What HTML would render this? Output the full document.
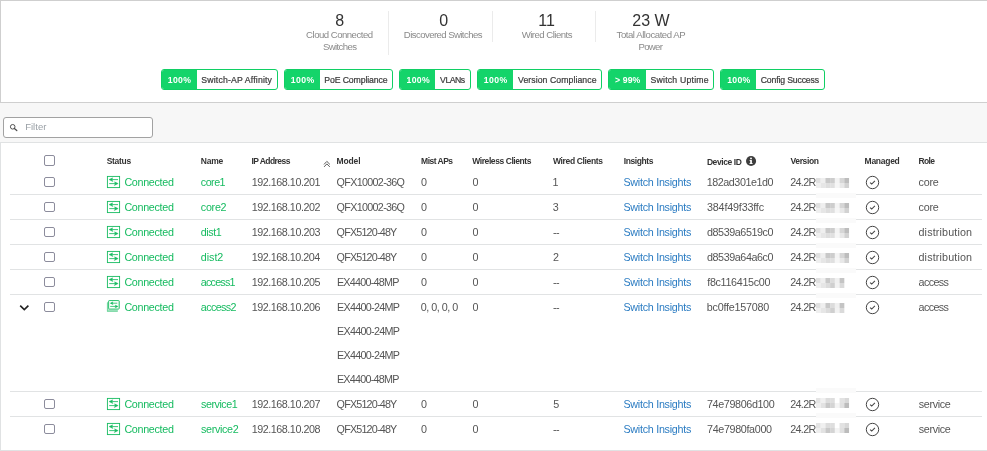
<!DOCTYPE html>
<html><head><meta charset="utf-8"><title>Switches</title><style>
html,body{margin:0;padding:0}
body{will-change:transform;width:987px;height:451px;background:#f7f7f7;position:relative;overflow:hidden;font-family:"Liberation Sans",sans-serif}
.abs{position:absolute}
.t{position:absolute;white-space:pre;line-height:20px;height:20px}
.panel{position:absolute;background:#fff;border:1px solid #e0e2e3;box-sizing:content-box;margin:0 0 0 0}
.vsep{position:absolute;width:1px;background:#ebebeb}
.pill{position:absolute;top:69px;height:19px;border:1px solid #10cf64;border-radius:3px;background:#fff;overflow:hidden}
.pill i{position:absolute;left:0;top:0;bottom:0;background:#14d46a}
.filter{position:absolute;left:3px;top:117px;width:148px;height:19px;border:1px solid #a2a2a2;border-radius:3px;background:#fff}
.hl{position:absolute;left:10px;width:972px;height:1px;background:#e1e3e4}
.cb{position:absolute;width:8.4px;height:8px;border:1px solid #8c8c9c;border-radius:2px;background:#fff}
</style></head><body>
<div class="panel" style="left:0;top:0;width:1000px;height:101px;border-color:#cfcfcf"></div>
<div class="panel" style="left:0;top:142px;width:1000px;height:307px"></div>
<div class="vsep" style="left:388px;top:11px;height:44px"></div>
<div class="vsep" style="left:492px;top:11px;height:31px"></div>
<div class="vsep" style="left:595px;top:11px;height:31px"></div>
<div class="pill" style="left:161px;width:115.0px"><i style="width:35.0px"></i></div>
<div class="pill" style="left:284px;width:107.0px"><i style="width:35.0px"></i></div>
<div class="pill" style="left:399px;width:69.5px"><i style="width:34.6px"></i></div>
<div class="pill" style="left:477px;width:123.0px"><i style="width:35.0px"></i></div>
<div class="pill" style="left:608px;width:103.5px"><i style="width:36.8px"></i></div>
<div class="pill" style="left:720px;width:103.0px"><i style="width:35.0px"></i></div>
<div class="filter"></div>
<svg class="abs" style="left:8px;top:122px" width="12" height="12" viewBox="0 0 12 12"><circle cx="4.7" cy="4.8" r="2.3" fill="none" stroke="#4a4a4a" stroke-width="0.95"/><path d="M6.4 6.5 L8.8 8.5" stroke="#4a4a4a" stroke-width="1.25" stroke-linecap="round"/></svg>
<div class="hl" style="top:194px"></div>
<div class="hl" style="top:219px"></div>
<div class="hl" style="top:244px"></div>
<div class="hl" style="top:269px"></div>
<div class="hl" style="top:294px"></div>
<div class="hl" style="top:391px"></div>
<div class="hl" style="top:416px"></div>
<div class="cb" style="left:44px;top:155px;width:9px;height:9px"></div>
<div class="cb" style="left:44.3px;top:177px"></div>
<div class="cb" style="left:44.3px;top:202px"></div>
<div class="cb" style="left:44.3px;top:227px"></div>
<div class="cb" style="left:44.3px;top:252px"></div>
<div class="cb" style="left:44.3px;top:277px"></div>
<div class="cb" style="left:44.3px;top:302px"></div>
<div class="cb" style="left:44.3px;top:399px"></div>
<div class="cb" style="left:44.3px;top:424px"></div>
<svg class="abs" style="left:106px;top:175px" width="15" height="14" viewBox="0 0 15 14"><rect x="1.4" y="1.4" width="12.2" height="11.2" fill="none" stroke="#16bb60" stroke-width="0.9"/><path d="M4 4.6H12M3.2 8.6H11" stroke="#16bb60" stroke-width="0.85" fill="none"/><path d="M3 4.6L6.7 2.8L5.9 4.6L6.9 6.6Z" fill="#16bb60" stroke="#16bb60" stroke-width="0.4" stroke-linejoin="round"/><path d="M12.2 8.6L8.5 6.8L9.3 8.6L8.3 10.6Z" fill="#16bb60" stroke="#16bb60" stroke-width="0.4" stroke-linejoin="round"/></svg>
<svg class="abs" style="left:106px;top:200px" width="15" height="14" viewBox="0 0 15 14"><rect x="1.4" y="1.4" width="12.2" height="11.2" fill="none" stroke="#16bb60" stroke-width="0.9"/><path d="M4 4.6H12M3.2 8.6H11" stroke="#16bb60" stroke-width="0.85" fill="none"/><path d="M3 4.6L6.7 2.8L5.9 4.6L6.9 6.6Z" fill="#16bb60" stroke="#16bb60" stroke-width="0.4" stroke-linejoin="round"/><path d="M12.2 8.6L8.5 6.8L9.3 8.6L8.3 10.6Z" fill="#16bb60" stroke="#16bb60" stroke-width="0.4" stroke-linejoin="round"/></svg>
<svg class="abs" style="left:106px;top:225px" width="15" height="14" viewBox="0 0 15 14"><rect x="1.4" y="1.4" width="12.2" height="11.2" fill="none" stroke="#16bb60" stroke-width="0.9"/><path d="M4 4.6H12M3.2 8.6H11" stroke="#16bb60" stroke-width="0.85" fill="none"/><path d="M3 4.6L6.7 2.8L5.9 4.6L6.9 6.6Z" fill="#16bb60" stroke="#16bb60" stroke-width="0.4" stroke-linejoin="round"/><path d="M12.2 8.6L8.5 6.8L9.3 8.6L8.3 10.6Z" fill="#16bb60" stroke="#16bb60" stroke-width="0.4" stroke-linejoin="round"/></svg>
<svg class="abs" style="left:106px;top:250px" width="15" height="14" viewBox="0 0 15 14"><rect x="1.4" y="1.4" width="12.2" height="11.2" fill="none" stroke="#16bb60" stroke-width="0.9"/><path d="M4 4.6H12M3.2 8.6H11" stroke="#16bb60" stroke-width="0.85" fill="none"/><path d="M3 4.6L6.7 2.8L5.9 4.6L6.9 6.6Z" fill="#16bb60" stroke="#16bb60" stroke-width="0.4" stroke-linejoin="round"/><path d="M12.2 8.6L8.5 6.8L9.3 8.6L8.3 10.6Z" fill="#16bb60" stroke="#16bb60" stroke-width="0.4" stroke-linejoin="round"/></svg>
<svg class="abs" style="left:106px;top:275px" width="15" height="14" viewBox="0 0 15 14"><rect x="1.4" y="1.4" width="12.2" height="11.2" fill="none" stroke="#16bb60" stroke-width="0.9"/><path d="M4 4.6H12M3.2 8.6H11" stroke="#16bb60" stroke-width="0.85" fill="none"/><path d="M3 4.6L6.7 2.8L5.9 4.6L6.9 6.6Z" fill="#16bb60" stroke="#16bb60" stroke-width="0.4" stroke-linejoin="round"/><path d="M12.2 8.6L8.5 6.8L9.3 8.6L8.3 10.6Z" fill="#16bb60" stroke="#16bb60" stroke-width="0.4" stroke-linejoin="round"/></svg>
<svg class="abs" style="left:106px;top:300px" width="15" height="14" viewBox="0 0 15 14"><path d="M1 2.4L2.6 1V9.4H11.9L11.9 11.8H1Z" fill="#16bb60" opacity="0.42"/><path d="M13.3 0.6L14 0.9V8L13.3 9Z" fill="#16bb60" opacity="0.4"/><path d="M1.3 2.6V11.4H11.6" fill="none" stroke="#16bb60" stroke-width="0.6" opacity="0.55"/><rect x="2.65" y="0.55" width="10.5" height="8.5" rx="0.6" fill="#fff" stroke="#16bb60" stroke-width="0.9"/><path d="M5 3.2H11.3M4.2 6.4H11" stroke="#16bb60" stroke-width="0.8" fill="none"/><path d="M4.1 3.2L7 1.8L6.4 3.2L7.1 4.7Z" fill="#16bb60" stroke="#16bb60" stroke-width="0.3" stroke-linejoin="round"/><path d="M12.1 6.4L9.2 5L9.8 6.4L9.1 7.9Z" fill="#16bb60" stroke="#16bb60" stroke-width="0.3" stroke-linejoin="round"/></svg>
<svg class="abs" style="left:106px;top:397px" width="15" height="14" viewBox="0 0 15 14"><rect x="1.4" y="1.4" width="12.2" height="11.2" fill="none" stroke="#16bb60" stroke-width="0.9"/><path d="M4 4.6H12M3.2 8.6H11" stroke="#16bb60" stroke-width="0.85" fill="none"/><path d="M3 4.6L6.7 2.8L5.9 4.6L6.9 6.6Z" fill="#16bb60" stroke="#16bb60" stroke-width="0.4" stroke-linejoin="round"/><path d="M12.2 8.6L8.5 6.8L9.3 8.6L8.3 10.6Z" fill="#16bb60" stroke="#16bb60" stroke-width="0.4" stroke-linejoin="round"/></svg>
<svg class="abs" style="left:106px;top:422px" width="15" height="14" viewBox="0 0 15 14"><rect x="1.4" y="1.4" width="12.2" height="11.2" fill="none" stroke="#16bb60" stroke-width="0.9"/><path d="M4 4.6H12M3.2 8.6H11" stroke="#16bb60" stroke-width="0.85" fill="none"/><path d="M3 4.6L6.7 2.8L5.9 4.6L6.9 6.6Z" fill="#16bb60" stroke="#16bb60" stroke-width="0.4" stroke-linejoin="round"/><path d="M12.2 8.6L8.5 6.8L9.3 8.6L8.3 10.6Z" fill="#16bb60" stroke="#16bb60" stroke-width="0.4" stroke-linejoin="round"/></svg>
<svg class="abs" style="left:864px;top:174px" width="17" height="17" viewBox="0 0 17 17"><circle cx="8.5" cy="8.5" r="6.2" fill="none" stroke="#444" stroke-width="1"/><path d="M6.1 8.6L7.7 10.0L10.9 6.8" fill="none" stroke="#444" stroke-width="1.05"/></svg>
<svg class="abs" style="left:864px;top:199px" width="17" height="17" viewBox="0 0 17 17"><circle cx="8.5" cy="8.5" r="6.2" fill="none" stroke="#444" stroke-width="1"/><path d="M6.1 8.6L7.7 10.0L10.9 6.8" fill="none" stroke="#444" stroke-width="1.05"/></svg>
<svg class="abs" style="left:864px;top:224px" width="17" height="17" viewBox="0 0 17 17"><circle cx="8.5" cy="8.5" r="6.2" fill="none" stroke="#444" stroke-width="1"/><path d="M6.1 8.6L7.7 10.0L10.9 6.8" fill="none" stroke="#444" stroke-width="1.05"/></svg>
<svg class="abs" style="left:864px;top:249px" width="17" height="17" viewBox="0 0 17 17"><circle cx="8.5" cy="8.5" r="6.2" fill="none" stroke="#444" stroke-width="1"/><path d="M6.1 8.6L7.7 10.0L10.9 6.8" fill="none" stroke="#444" stroke-width="1.05"/></svg>
<svg class="abs" style="left:864px;top:274px" width="17" height="17" viewBox="0 0 17 17"><circle cx="8.5" cy="8.5" r="6.2" fill="none" stroke="#444" stroke-width="1"/><path d="M6.1 8.6L7.7 10.0L10.9 6.8" fill="none" stroke="#444" stroke-width="1.05"/></svg>
<svg class="abs" style="left:864px;top:299px" width="17" height="17" viewBox="0 0 17 17"><circle cx="8.5" cy="8.5" r="6.2" fill="none" stroke="#444" stroke-width="1"/><path d="M6.1 8.6L7.7 10.0L10.9 6.8" fill="none" stroke="#444" stroke-width="1.05"/></svg>
<svg class="abs" style="left:864px;top:396px" width="17" height="17" viewBox="0 0 17 17"><circle cx="8.5" cy="8.5" r="6.2" fill="none" stroke="#444" stroke-width="1"/><path d="M6.1 8.6L7.7 10.0L10.9 6.8" fill="none" stroke="#444" stroke-width="1.05"/></svg>
<svg class="abs" style="left:864px;top:421px" width="17" height="17" viewBox="0 0 17 17"><circle cx="8.5" cy="8.5" r="6.2" fill="none" stroke="#444" stroke-width="1"/><path d="M6.1 8.6L7.7 10.0L10.9 6.8" fill="none" stroke="#444" stroke-width="1.05"/></svg>
<svg class="abs" style="left:18px;top:302px" width="13" height="11" viewBox="0 0 13 11"><path d="M2.2 3.6L6.3 7.6L10.4 3.6" fill="none" stroke="#222" stroke-width="1.6"/></svg>
<svg class="abs" style="left:322px;top:159px" width="10" height="10" viewBox="0 0 10 10"><path d="M2 5.4L4.85 2.4L7.9 5.4M2.1 7.9L4.85 4.9L7.8 7.9" fill="none" stroke="#333" stroke-width="0.8"/></svg>
<svg class="abs" style="left:745px;top:155px" width="12" height="12" viewBox="0 0 12 12"><circle cx="6.05" cy="5.95" r="5.05" fill="#3e3e3e"/><rect x="5.2" y="5.1" width="1.7" height="3.6" fill="#fff"/><rect x="4.6" y="5.1" width="1.6" height="0.9" fill="#fff"/><rect x="4.5" y="8.1" width="3.1" height="0.9" fill="#fff"/><circle cx="6" cy="3.4" r="0.95" fill="#fff"/></svg>
<svg class="abs" style="left:816px;top:178px" width="40" height="10" viewBox="0 0 40 10"><rect x="0.00" y="0" width="4.76" height="5" fill="#e0e0e0"/><rect x="4.71" y="0" width="4.76" height="5" fill="#efefef"/><rect x="9.43" y="0" width="4.76" height="5" fill="#c8c8c8"/><rect x="14.14" y="0" width="4.76" height="5" fill="#cdcdcd"/><rect x="18.86" y="0" width="4.76" height="5" fill="#f4f4f4"/><rect x="23.57" y="0" width="4.76" height="5" fill="#d6d6d6"/><rect x="28.29" y="0" width="4.76" height="5" fill="#bdbdbd"/><rect x="0.00" y="5" width="4.76" height="5" fill="#efefef"/><rect x="4.71" y="5" width="4.76" height="5" fill="#e6e6e6"/><rect x="9.43" y="5" width="4.76" height="5" fill="#dedede"/><rect x="14.14" y="5" width="4.76" height="5" fill="#e0e0e0"/><rect x="18.86" y="5" width="4.76" height="5" fill="#f6f6f6"/><rect x="23.57" y="5" width="4.76" height="5" fill="#e8e8e8"/><rect x="28.29" y="5" width="4.76" height="5" fill="#d2d2d2"/></svg>
<svg class="abs" style="left:816px;top:203px" width="40" height="10" viewBox="0 0 40 10"><rect x="0.00" y="0" width="4.76" height="5" fill="#e0e0e0"/><rect x="4.71" y="0" width="4.76" height="5" fill="#efefef"/><rect x="9.43" y="0" width="4.76" height="5" fill="#c8c8c8"/><rect x="14.14" y="0" width="4.76" height="5" fill="#cdcdcd"/><rect x="18.86" y="0" width="4.76" height="5" fill="#f4f4f4"/><rect x="23.57" y="0" width="4.76" height="5" fill="#d6d6d6"/><rect x="28.29" y="0" width="4.76" height="5" fill="#bdbdbd"/><rect x="0.00" y="5" width="4.76" height="5" fill="#efefef"/><rect x="4.71" y="5" width="4.76" height="5" fill="#e6e6e6"/><rect x="9.43" y="5" width="4.76" height="5" fill="#dedede"/><rect x="14.14" y="5" width="4.76" height="5" fill="#e0e0e0"/><rect x="18.86" y="5" width="4.76" height="5" fill="#f6f6f6"/><rect x="23.57" y="5" width="4.76" height="5" fill="#e8e8e8"/><rect x="28.29" y="5" width="4.76" height="5" fill="#d2d2d2"/></svg>
<svg class="abs" style="left:816px;top:228px" width="40" height="10" viewBox="0 0 40 10"><rect x="0.00" y="0" width="4.76" height="5" fill="#e0e0e0"/><rect x="4.71" y="0" width="4.76" height="5" fill="#efefef"/><rect x="9.43" y="0" width="4.76" height="5" fill="#c8c8c8"/><rect x="14.14" y="0" width="4.76" height="5" fill="#cdcdcd"/><rect x="18.86" y="0" width="4.76" height="5" fill="#f4f4f4"/><rect x="23.57" y="0" width="4.76" height="5" fill="#d6d6d6"/><rect x="28.29" y="0" width="4.76" height="5" fill="#bdbdbd"/><rect x="0.00" y="5" width="4.76" height="5" fill="#efefef"/><rect x="4.71" y="5" width="4.76" height="5" fill="#e6e6e6"/><rect x="9.43" y="5" width="4.76" height="5" fill="#dedede"/><rect x="14.14" y="5" width="4.76" height="5" fill="#e0e0e0"/><rect x="18.86" y="5" width="4.76" height="5" fill="#f6f6f6"/><rect x="23.57" y="5" width="4.76" height="5" fill="#e8e8e8"/><rect x="28.29" y="5" width="4.76" height="5" fill="#d2d2d2"/></svg>
<svg class="abs" style="left:816px;top:253px" width="40" height="10" viewBox="0 0 40 10"><rect x="0.00" y="0" width="4.76" height="5" fill="#e0e0e0"/><rect x="4.71" y="0" width="4.76" height="5" fill="#efefef"/><rect x="9.43" y="0" width="4.76" height="5" fill="#c8c8c8"/><rect x="14.14" y="0" width="4.76" height="5" fill="#cdcdcd"/><rect x="18.86" y="0" width="4.76" height="5" fill="#f4f4f4"/><rect x="23.57" y="0" width="4.76" height="5" fill="#d6d6d6"/><rect x="28.29" y="0" width="4.76" height="5" fill="#bdbdbd"/><rect x="0.00" y="5" width="4.76" height="5" fill="#efefef"/><rect x="4.71" y="5" width="4.76" height="5" fill="#e6e6e6"/><rect x="9.43" y="5" width="4.76" height="5" fill="#dedede"/><rect x="14.14" y="5" width="4.76" height="5" fill="#e0e0e0"/><rect x="18.86" y="5" width="4.76" height="5" fill="#f6f6f6"/><rect x="23.57" y="5" width="4.76" height="5" fill="#e8e8e8"/><rect x="28.29" y="5" width="4.76" height="5" fill="#d2d2d2"/></svg>
<svg class="abs" style="left:816px;top:278px" width="40" height="10" viewBox="0 0 40 10"><rect x="0.00" y="0" width="4.76" height="5" fill="#e0e0e0"/><rect x="4.71" y="0" width="4.76" height="5" fill="#efefef"/><rect x="9.43" y="0" width="4.76" height="5" fill="#c8c8c8"/><rect x="14.14" y="0" width="4.76" height="5" fill="#dcdcdc"/><rect x="18.86" y="0" width="4.76" height="5" fill="#f0f0f0"/><rect x="23.57" y="0" width="4.76" height="5" fill="#c4c4c4"/><rect x="0.00" y="5" width="4.76" height="5" fill="#efefef"/><rect x="4.71" y="5" width="4.76" height="5" fill="#e6e6e6"/><rect x="9.43" y="5" width="4.76" height="5" fill="#dcdcdc"/><rect x="14.14" y="5" width="4.76" height="5" fill="#cfcfcf"/><rect x="18.86" y="5" width="4.76" height="5" fill="#f2f2f2"/><rect x="23.57" y="5" width="4.76" height="5" fill="#dadada"/></svg>
<svg class="abs" style="left:816px;top:303px" width="40" height="10" viewBox="0 0 40 10"><rect x="0.00" y="0" width="4.76" height="5" fill="#e0e0e0"/><rect x="4.71" y="0" width="4.76" height="5" fill="#efefef"/><rect x="9.43" y="0" width="4.76" height="5" fill="#c8c8c8"/><rect x="14.14" y="0" width="4.76" height="5" fill="#dcdcdc"/><rect x="18.86" y="0" width="4.76" height="5" fill="#f0f0f0"/><rect x="23.57" y="0" width="4.76" height="5" fill="#c4c4c4"/><rect x="0.00" y="5" width="4.76" height="5" fill="#efefef"/><rect x="4.71" y="5" width="4.76" height="5" fill="#e6e6e6"/><rect x="9.43" y="5" width="4.76" height="5" fill="#dcdcdc"/><rect x="14.14" y="5" width="4.76" height="5" fill="#cfcfcf"/><rect x="18.86" y="5" width="4.76" height="5" fill="#f2f2f2"/><rect x="23.57" y="5" width="4.76" height="5" fill="#dadada"/></svg>
<svg class="abs" style="left:816px;top:398px" width="40" height="10" viewBox="0 0 40 10"><rect x="0.00" y="0" width="4.76" height="5" fill="#e4e4e4"/><rect x="4.71" y="0" width="4.76" height="5" fill="#f0f0f0"/><rect x="9.43" y="0" width="4.76" height="5" fill="#dcdcdc"/><rect x="14.14" y="0" width="4.76" height="5" fill="#dedede"/><rect x="18.86" y="0" width="4.76" height="5" fill="#ffffff"/><rect x="23.57" y="0" width="4.76" height="5" fill="#e2e2e2"/><rect x="28.29" y="0" width="4.76" height="5" fill="#d8d8d8"/><rect x="0.00" y="5" width="4.76" height="5" fill="#eeeeee"/><rect x="4.71" y="5" width="4.76" height="5" fill="#e2e2e2"/><rect x="9.43" y="5" width="4.76" height="5" fill="#c8c8c8"/><rect x="14.14" y="5" width="4.76" height="5" fill="#d4d4d4"/><rect x="18.86" y="5" width="4.76" height="5" fill="#f4f4f4"/><rect x="23.57" y="5" width="4.76" height="5" fill="#e0e0e0"/><rect x="28.29" y="5" width="4.76" height="5" fill="#bcbcbc"/></svg>
<svg class="abs" style="left:816px;top:423px" width="40" height="10" viewBox="0 0 40 10"><rect x="0.00" y="0" width="4.76" height="5" fill="#e4e4e4"/><rect x="4.71" y="0" width="4.76" height="5" fill="#f0f0f0"/><rect x="9.43" y="0" width="4.76" height="5" fill="#dcdcdc"/><rect x="14.14" y="0" width="4.76" height="5" fill="#dedede"/><rect x="18.86" y="0" width="4.76" height="5" fill="#ffffff"/><rect x="23.57" y="0" width="4.76" height="5" fill="#e2e2e2"/><rect x="28.29" y="0" width="4.76" height="5" fill="#d8d8d8"/><rect x="0.00" y="5" width="4.76" height="5" fill="#eeeeee"/><rect x="4.71" y="5" width="4.76" height="5" fill="#e2e2e2"/><rect x="9.43" y="5" width="4.76" height="5" fill="#c8c8c8"/><rect x="14.14" y="5" width="4.76" height="5" fill="#d4d4d4"/><rect x="18.86" y="5" width="4.76" height="5" fill="#f4f4f4"/><rect x="23.57" y="5" width="4.76" height="5" fill="#e0e0e0"/><rect x="28.29" y="5" width="4.76" height="5" fill="#bcbcbc"/></svg>
<div class="abs" style="left:816px;top:193px;width:40px;height:5px;background:#fafafa"></div>
<div class="abs" style="left:816px;top:218px;width:40px;height:5px;background:#fafafa"></div>
<div class="abs" style="left:816px;top:243px;width:40px;height:5px;background:#fafafa"></div>
<div class="abs" style="left:816px;top:268px;width:40px;height:5px;background:#fafafa"></div>
<div class="abs" style="left:816px;top:293px;width:40px;height:5px;background:#fafafa"></div>
<div class="abs" style="left:816px;top:388px;width:40px;height:5px;background:#fafafa"></div>
<div class="abs" style="left:816px;top:413px;width:40px;height:5px;background:#fafafa"></div>
<span class="t" style="left:335.35px;top:11.06px;font-size:16.0px;color:#333">8</span>
<span class="t" style="left:439.18px;top:11.06px;font-size:16.0px;color:#333">0</span>
<span class="t" style="left:538.20px;top:11.06px;font-size:16.0px;color:#333">11</span>
<span class="t" style="left:632.25px;top:11.06px;font-size:16.0px;color:#333">23 W</span>
<span class="t" style="left:306.10px;top:24.97px;font-size:9.6px;color:#8a8a8a;letter-spacing:-0.514px">Cloud Connected</span>
<span class="t" style="left:322.90px;top:36.67px;font-size:9.6px;color:#8a8a8a;letter-spacing:-0.614px">Switches</span>
<span class="t" style="left:403.85px;top:24.97px;font-size:9.6px;color:#8a8a8a;letter-spacing:-0.578px">Discovered Switches</span>
<span class="t" style="left:521.70px;top:24.97px;font-size:9.6px;color:#8a8a8a;letter-spacing:-0.521px">Wired Clients</span>
<span class="t" style="left:616.55px;top:24.97px;font-size:9.6px;color:#8a8a8a;letter-spacing:-0.453px">Total Allocated AP</span>
<span class="t" style="left:638.55px;top:36.67px;font-size:9.6px;color:#8a8a8a;letter-spacing:-0.712px">Power</span>
<span class="t" style="left:167.70px;top:69.99px;font-size:8.7px;color:#fff;font-weight:700;letter-spacing:0.367px">100%</span>
<span class="t" style="left:201.30px;top:69.99px;font-size:8.7px;color:#3c3c3c;letter-spacing:0.168px;-webkit-text-stroke:0.22px #3c3c3c">Switch-AP Affinity</span>
<span class="t" style="left:290.70px;top:69.99px;font-size:8.7px;color:#fff;font-weight:700;letter-spacing:0.467px">100%</span>
<span class="t" style="left:324.25px;top:69.99px;font-size:8.7px;color:#3c3c3c;letter-spacing:-0.104px;-webkit-text-stroke:0.22px #3c3c3c">PoE Compliance</span>
<span class="t" style="left:406.60px;top:69.99px;font-size:8.7px;color:#fff;font-weight:700;letter-spacing:0.267px">100%</span>
<span class="t" style="left:440.10px;top:69.99px;font-size:8.7px;color:#3c3c3c;letter-spacing:-0.513px;-webkit-text-stroke:0.22px #3c3c3c">VLANs</span>
<span class="t" style="left:483.70px;top:69.99px;font-size:8.7px;color:#fff;font-weight:700;letter-spacing:0.467px">100%</span>
<span class="t" style="left:518.00px;top:69.99px;font-size:8.7px;color:#3c3c3c;letter-spacing:0.071px;-webkit-text-stroke:0.22px #3c3c3c">Version Compliance</span>
<span class="t" style="left:615.05px;top:69.99px;font-size:8.7px;color:#fff;font-weight:700;letter-spacing:0.100px">&gt; 99%</span>
<span class="t" style="left:650.60px;top:69.99px;font-size:8.7px;color:#3c3c3c;letter-spacing:0.204px;-webkit-text-stroke:0.22px #3c3c3c">Switch Uptime</span>
<span class="t" style="left:727.20px;top:69.99px;font-size:8.7px;color:#fff;font-weight:700;letter-spacing:0.267px">100%</span>
<span class="t" style="left:760.70px;top:69.99px;font-size:8.7px;color:#3c3c3c;letter-spacing:-0.154px;-webkit-text-stroke:0.22px #3c3c3c">Config Success</span>
<span class="t" style="left:25.15px;top:116.71px;font-size:9.5px;color:#9aa0a6;letter-spacing:0.030px">Filter</span>
<span class="t" style="left:106.65px;top:150.75px;font-size:8.5px;color:#333;font-weight:700;letter-spacing:-0.300px">Status</span>
<span class="t" style="left:200.80px;top:150.75px;font-size:8.5px;color:#333;font-weight:700;letter-spacing:-0.200px">Name</span>
<span class="t" style="left:251.40px;top:150.75px;font-size:8.5px;color:#333;font-weight:700;letter-spacing:-0.544px">IP Address</span>
<span class="t" style="left:336.50px;top:150.75px;font-size:8.5px;color:#333;font-weight:700;letter-spacing:-0.125px">Model</span>
<span class="t" style="left:421.10px;top:150.75px;font-size:8.5px;color:#333;font-weight:700;letter-spacing:-0.521px">Mist APs</span>
<span class="t" style="left:472.30px;top:150.75px;font-size:8.5px;color:#333;font-weight:700;letter-spacing:-0.430px">Wireless Clients</span>
<span class="t" style="left:553.00px;top:150.75px;font-size:8.5px;color:#333;font-weight:700;letter-spacing:-0.350px">Wired Clients</span>
<span class="t" style="left:623.70px;top:150.75px;font-size:8.5px;color:#333;font-weight:700;letter-spacing:-0.407px">Insights</span>
<span class="t" style="left:790.45px;top:150.75px;font-size:8.5px;color:#333;font-weight:700;letter-spacing:-0.350px">Version</span>
<span class="t" style="left:864.60px;top:150.75px;font-size:8.5px;color:#333;font-weight:700;letter-spacing:-0.275px">Managed</span>
<span class="t" style="left:918.60px;top:150.75px;font-size:8.5px;color:#333;font-weight:700;letter-spacing:-0.683px">Role</span>
<span class="t" style="left:706.90px;top:151.55px;font-size:8.5px;color:#333;font-weight:700;letter-spacing:-0.412px">Device ID</span>
<span class="t" style="left:124.40px;top:171.98px;font-size:10.75px;color:#16bb60;letter-spacing:-0.306px">Connected</span>
<span class="t" style="left:200.80px;top:171.98px;font-size:10.75px;color:#16bb60;letter-spacing:-0.525px">core1</span>
<span class="t" style="left:251.65px;top:171.98px;font-size:10.75px;color:#555;letter-spacing:-0.454px">192.168.10.201</span>
<span class="t" style="left:336.60px;top:171.98px;font-size:10.75px;color:#555;letter-spacing:-0.682px">QFX10002-36Q</span>
<span class="t" style="left:421.00px;top:171.98px;font-size:10.75px;color:#555">0</span>
<span class="t" style="left:472.60px;top:171.98px;font-size:10.75px;color:#555">0</span>
<span class="t" style="left:552.62px;top:171.98px;font-size:10.75px;color:#555">1</span>
<span class="t" style="left:623.40px;top:171.98px;font-size:10.75px;color:#2b7cc2;letter-spacing:-0.268px">Switch Insights</span>
<span class="t" style="left:706.75px;top:171.98px;font-size:10.75px;color:#555;letter-spacing:-0.455px">182ad301e1d0</span>
<span class="t" style="left:790.20px;top:171.98px;font-size:10.75px;color:#555;letter-spacing:-0.638px">24.2R</span>
<span class="t" style="left:918.50px;top:171.98px;font-size:10.75px;color:#555;letter-spacing:-0.233px">core</span>
<span class="t" style="left:124.40px;top:196.98px;font-size:10.75px;color:#16bb60;letter-spacing:-0.306px">Connected</span>
<span class="t" style="left:200.80px;top:196.98px;font-size:10.75px;color:#16bb60;letter-spacing:-0.275px">core2</span>
<span class="t" style="left:251.65px;top:196.98px;font-size:10.75px;color:#555;letter-spacing:-0.454px">192.168.10.202</span>
<span class="t" style="left:336.60px;top:196.98px;font-size:10.75px;color:#555;letter-spacing:-0.682px">QFX10002-36Q</span>
<span class="t" style="left:421.00px;top:196.98px;font-size:10.75px;color:#555">0</span>
<span class="t" style="left:472.60px;top:196.98px;font-size:10.75px;color:#555">0</span>
<span class="t" style="left:552.70px;top:196.98px;font-size:10.75px;color:#555">3</span>
<span class="t" style="left:623.40px;top:196.98px;font-size:10.75px;color:#2b7cc2;letter-spacing:-0.268px">Switch Insights</span>
<span class="t" style="left:707.00px;top:196.98px;font-size:10.75px;color:#555;letter-spacing:-0.177px">384f49f33ffc</span>
<span class="t" style="left:790.20px;top:196.98px;font-size:10.75px;color:#555;letter-spacing:-0.638px">24.2R</span>
<span class="t" style="left:918.50px;top:196.98px;font-size:10.75px;color:#555;letter-spacing:-0.233px">core</span>
<span class="t" style="left:124.40px;top:221.98px;font-size:10.75px;color:#16bb60;letter-spacing:-0.306px">Connected</span>
<span class="t" style="left:200.80px;top:221.98px;font-size:10.75px;color:#16bb60;letter-spacing:-0.438px">dist1</span>
<span class="t" style="left:251.65px;top:221.98px;font-size:10.75px;color:#555;letter-spacing:-0.454px">192.168.10.203</span>
<span class="t" style="left:336.60px;top:221.98px;font-size:10.75px;color:#555;letter-spacing:-0.810px">QFX5120-48Y</span>
<span class="t" style="left:421.00px;top:221.98px;font-size:10.75px;color:#555">0</span>
<span class="t" style="left:472.60px;top:221.98px;font-size:10.75px;color:#555">0</span>
<span class="t" style="left:553.00px;top:221.98px;font-size:10.75px;color:#555;letter-spacing:-0.650px">--</span>
<span class="t" style="left:623.40px;top:221.98px;font-size:10.75px;color:#2b7cc2;letter-spacing:-0.268px">Switch Insights</span>
<span class="t" style="left:707.00px;top:221.98px;font-size:10.75px;color:#555;letter-spacing:-0.423px">d8539a6519c0</span>
<span class="t" style="left:790.20px;top:221.98px;font-size:10.75px;color:#555;letter-spacing:-0.638px">24.2R</span>
<span class="t" style="left:918.50px;top:221.98px;font-size:10.75px;color:#555;letter-spacing:0.141px">distribution</span>
<span class="t" style="left:124.40px;top:246.98px;font-size:10.75px;color:#16bb60;letter-spacing:-0.306px">Connected</span>
<span class="t" style="left:200.80px;top:246.98px;font-size:10.75px;color:#16bb60;letter-spacing:-0.038px">dist2</span>
<span class="t" style="left:251.65px;top:246.98px;font-size:10.75px;color:#555;letter-spacing:-0.473px">192.168.10.204</span>
<span class="t" style="left:336.60px;top:246.98px;font-size:10.75px;color:#555;letter-spacing:-0.810px">QFX5120-48Y</span>
<span class="t" style="left:421.00px;top:246.98px;font-size:10.75px;color:#555">0</span>
<span class="t" style="left:472.60px;top:246.98px;font-size:10.75px;color:#555">0</span>
<span class="t" style="left:552.95px;top:246.98px;font-size:10.75px;color:#555">2</span>
<span class="t" style="left:623.40px;top:246.98px;font-size:10.75px;color:#2b7cc2;letter-spacing:-0.268px">Switch Insights</span>
<span class="t" style="left:707.00px;top:246.98px;font-size:10.75px;color:#555;letter-spacing:-0.423px">d8539a64a6c0</span>
<span class="t" style="left:790.20px;top:246.98px;font-size:10.75px;color:#555;letter-spacing:-0.638px">24.2R</span>
<span class="t" style="left:918.50px;top:246.98px;font-size:10.75px;color:#555;letter-spacing:0.141px">distribution</span>
<span class="t" style="left:124.40px;top:271.98px;font-size:10.75px;color:#16bb60;letter-spacing:-0.306px">Connected</span>
<span class="t" style="left:200.80px;top:271.98px;font-size:10.75px;color:#16bb60;letter-spacing:-0.783px">access1</span>
<span class="t" style="left:251.65px;top:271.98px;font-size:10.75px;color:#555;letter-spacing:-0.454px">192.168.10.205</span>
<span class="t" style="left:336.95px;top:271.98px;font-size:10.75px;color:#555;letter-spacing:-0.745px">EX4400-48MP</span>
<span class="t" style="left:421.00px;top:271.98px;font-size:10.75px;color:#555">0</span>
<span class="t" style="left:472.60px;top:271.98px;font-size:10.75px;color:#555">0</span>
<span class="t" style="left:553.00px;top:271.98px;font-size:10.75px;color:#555;letter-spacing:-0.650px">--</span>
<span class="t" style="left:623.40px;top:271.98px;font-size:10.75px;color:#2b7cc2;letter-spacing:-0.268px">Switch Insights</span>
<span class="t" style="left:707.25px;top:271.98px;font-size:10.75px;color:#555;letter-spacing:-0.327px">f8c116415c00</span>
<span class="t" style="left:790.20px;top:271.98px;font-size:10.75px;color:#555;letter-spacing:-0.638px">24.2R</span>
<span class="t" style="left:918.50px;top:271.98px;font-size:10.75px;color:#555;letter-spacing:-0.600px">access</span>
<span class="t" style="left:124.40px;top:296.98px;font-size:10.75px;color:#16bb60;letter-spacing:-0.306px">Connected</span>
<span class="t" style="left:200.80px;top:296.98px;font-size:10.75px;color:#16bb60;letter-spacing:-0.617px">access2</span>
<span class="t" style="left:251.65px;top:296.98px;font-size:10.75px;color:#555;letter-spacing:-0.454px">192.168.10.206</span>
<span class="t" style="left:336.95px;top:296.98px;font-size:10.75px;color:#555;letter-spacing:-0.685px">EX4400-24MP</span>
<span class="t" style="left:336.95px;top:320.98px;font-size:10.75px;color:#555;letter-spacing:-0.685px">EX4400-24MP</span>
<span class="t" style="left:336.95px;top:344.98px;font-size:10.75px;color:#555;letter-spacing:-0.685px">EX4400-24MP</span>
<span class="t" style="left:336.95px;top:368.98px;font-size:10.75px;color:#555;letter-spacing:-0.745px">EX4400-48MP</span>
<span class="t" style="left:420.80px;top:296.98px;font-size:10.75px;color:#555;letter-spacing:-0.489px">0, 0, 0, 0</span>
<span class="t" style="left:472.60px;top:296.98px;font-size:10.75px;color:#555">0</span>
<span class="t" style="left:553.00px;top:296.98px;font-size:10.75px;color:#555;letter-spacing:-0.650px">--</span>
<span class="t" style="left:623.40px;top:296.98px;font-size:10.75px;color:#2b7cc2;letter-spacing:-0.268px">Switch Insights</span>
<span class="t" style="left:706.75px;top:296.98px;font-size:10.75px;color:#555;letter-spacing:-0.223px">bc0ffe157080</span>
<span class="t" style="left:790.20px;top:296.98px;font-size:10.75px;color:#555;letter-spacing:-0.638px">24.2R</span>
<span class="t" style="left:918.50px;top:296.98px;font-size:10.75px;color:#555;letter-spacing:-0.600px">access</span>
<span class="t" style="left:124.40px;top:393.98px;font-size:10.75px;color:#16bb60;letter-spacing:-0.306px">Connected</span>
<span class="t" style="left:201.05px;top:393.98px;font-size:10.75px;color:#16bb60;letter-spacing:-0.493px">service1</span>
<span class="t" style="left:251.65px;top:393.98px;font-size:10.75px;color:#555;letter-spacing:-0.454px">192.168.10.207</span>
<span class="t" style="left:336.60px;top:393.98px;font-size:10.75px;color:#555;letter-spacing:-0.810px">QFX5120-48Y</span>
<span class="t" style="left:421.00px;top:393.98px;font-size:10.75px;color:#555">0</span>
<span class="t" style="left:472.60px;top:393.98px;font-size:10.75px;color:#555">0</span>
<span class="t" style="left:553.15px;top:393.98px;font-size:10.75px;color:#555">5</span>
<span class="t" style="left:623.40px;top:393.98px;font-size:10.75px;color:#2b7cc2;letter-spacing:-0.268px">Switch Insights</span>
<span class="t" style="left:707.00px;top:393.98px;font-size:10.75px;color:#555;letter-spacing:-0.368px">74e79806d100</span>
<span class="t" style="left:790.20px;top:393.98px;font-size:10.75px;color:#555;letter-spacing:-0.638px">24.2R</span>
<span class="t" style="left:918.75px;top:393.98px;font-size:10.75px;color:#555;letter-spacing:-0.325px">service</span>
<span class="t" style="left:124.40px;top:418.98px;font-size:10.75px;color:#16bb60;letter-spacing:-0.306px">Connected</span>
<span class="t" style="left:201.05px;top:418.98px;font-size:10.75px;color:#16bb60;letter-spacing:-0.350px">service2</span>
<span class="t" style="left:251.65px;top:418.98px;font-size:10.75px;color:#555;letter-spacing:-0.454px">192.168.10.208</span>
<span class="t" style="left:336.60px;top:418.98px;font-size:10.75px;color:#555;letter-spacing:-0.810px">QFX5120-48Y</span>
<span class="t" style="left:421.00px;top:418.98px;font-size:10.75px;color:#555">0</span>
<span class="t" style="left:472.60px;top:418.98px;font-size:10.75px;color:#555">0</span>
<span class="t" style="left:553.00px;top:418.98px;font-size:10.75px;color:#555;letter-spacing:-0.650px">--</span>
<span class="t" style="left:623.40px;top:418.98px;font-size:10.75px;color:#2b7cc2;letter-spacing:-0.268px">Switch Insights</span>
<span class="t" style="left:707.00px;top:418.98px;font-size:10.75px;color:#555;letter-spacing:-0.341px">74e7980fa000</span>
<span class="t" style="left:790.20px;top:418.98px;font-size:10.75px;color:#555;letter-spacing:-0.638px">24.2R</span>
<span class="t" style="left:918.75px;top:418.98px;font-size:10.75px;color:#555;letter-spacing:-0.325px">service</span>
</body></html>
